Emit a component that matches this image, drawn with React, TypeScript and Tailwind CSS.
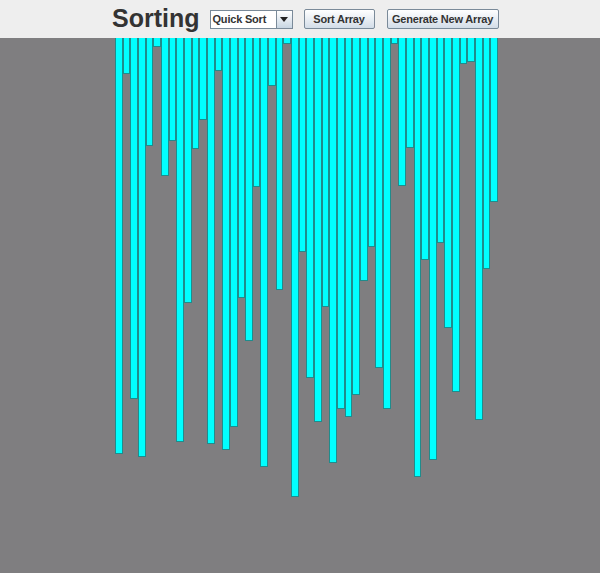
import React from "react";

// bottom edge (y) of each bar as it appears in the panel, header is 38px tall
const bottoms = [
  453, 73, 398, 456, 145, 46, 175, 140, 441, 302, 148, 119, 443, 70, 449, 426, 297, 340, 186, 466, 85, 289, 43, 496, 251,
  377, 421, 306, 462, 408, 416, 394, 280, 246, 367, 408, 43, 185, 147, 476, 259, 459, 242, 327, 391, 63, 61, 419, 268, 201,
];

export default function App() {
  return (
    <div className="w-[600px] h-[573px] flex flex-col bg-[#7f7e80] overflow-hidden" style={{ fontFamily: '"Liberation Sans", Arial, sans-serif' }}>
      {/* HEADER */}
      <div className="h-[38px] shrink-0 bg-[#eeeeee] flex items-center">
        <h1 className="ml-[112px] text-[25px] font-bold text-[#333333] leading-none -mt-[2px]">Sorting</h1>

        <div className="ml-[10px] w-[83px] h-[19px] flex border border-[#7a8a99] bg-white">
          <span className="flex-1 text-[11px] font-bold text-[#333333] leading-[17px] pl-[2px] tracking-[-0.2px]">Quick Sort</span>
          <div className="w-[16px] h-full border-l border-[#7a8a99] bg-gradient-to-b from-[#ffffff] to-[#c8d6e3] flex items-center justify-center">
            <svg width="8" height="5" viewBox="0 0 8 5">
              <path d="M0 0 L8 0 L4 5 Z" fill="#222" />
            </svg>
          </div>
        </div>

        <button className="ml-[11px] w-[71px] h-[20px] border border-[#7a8a99] rounded-[2px] bg-gradient-to-b from-[#ffffff] to-[#d3dde8] text-[11px] font-bold text-[#333333] leading-none tracking-[-0.2px]">
          Sort Array
        </button>
        <button className="ml-[12px] w-[112px] h-[20px] border border-[#7a8a99] rounded-[2px] bg-gradient-to-b from-[#ffffff] to-[#d3dde8] text-[11px] font-bold text-[#333333] leading-none tracking-[-0.2px]">
          Generate New Array
        </button>
      </div>

      {/* BARS */}
      <div className="flex items-start ml-[115px] w-[383px]">
        {bottoms.map((b, i) => (
          <div
            key={i}
            className="flex-1 bg-[#00ffff] border border-t-0 border-[#1f8c8c]"
            style={{ height: b - 37 }}
          />
        ))}
      </div>
    </div>
  );
}
